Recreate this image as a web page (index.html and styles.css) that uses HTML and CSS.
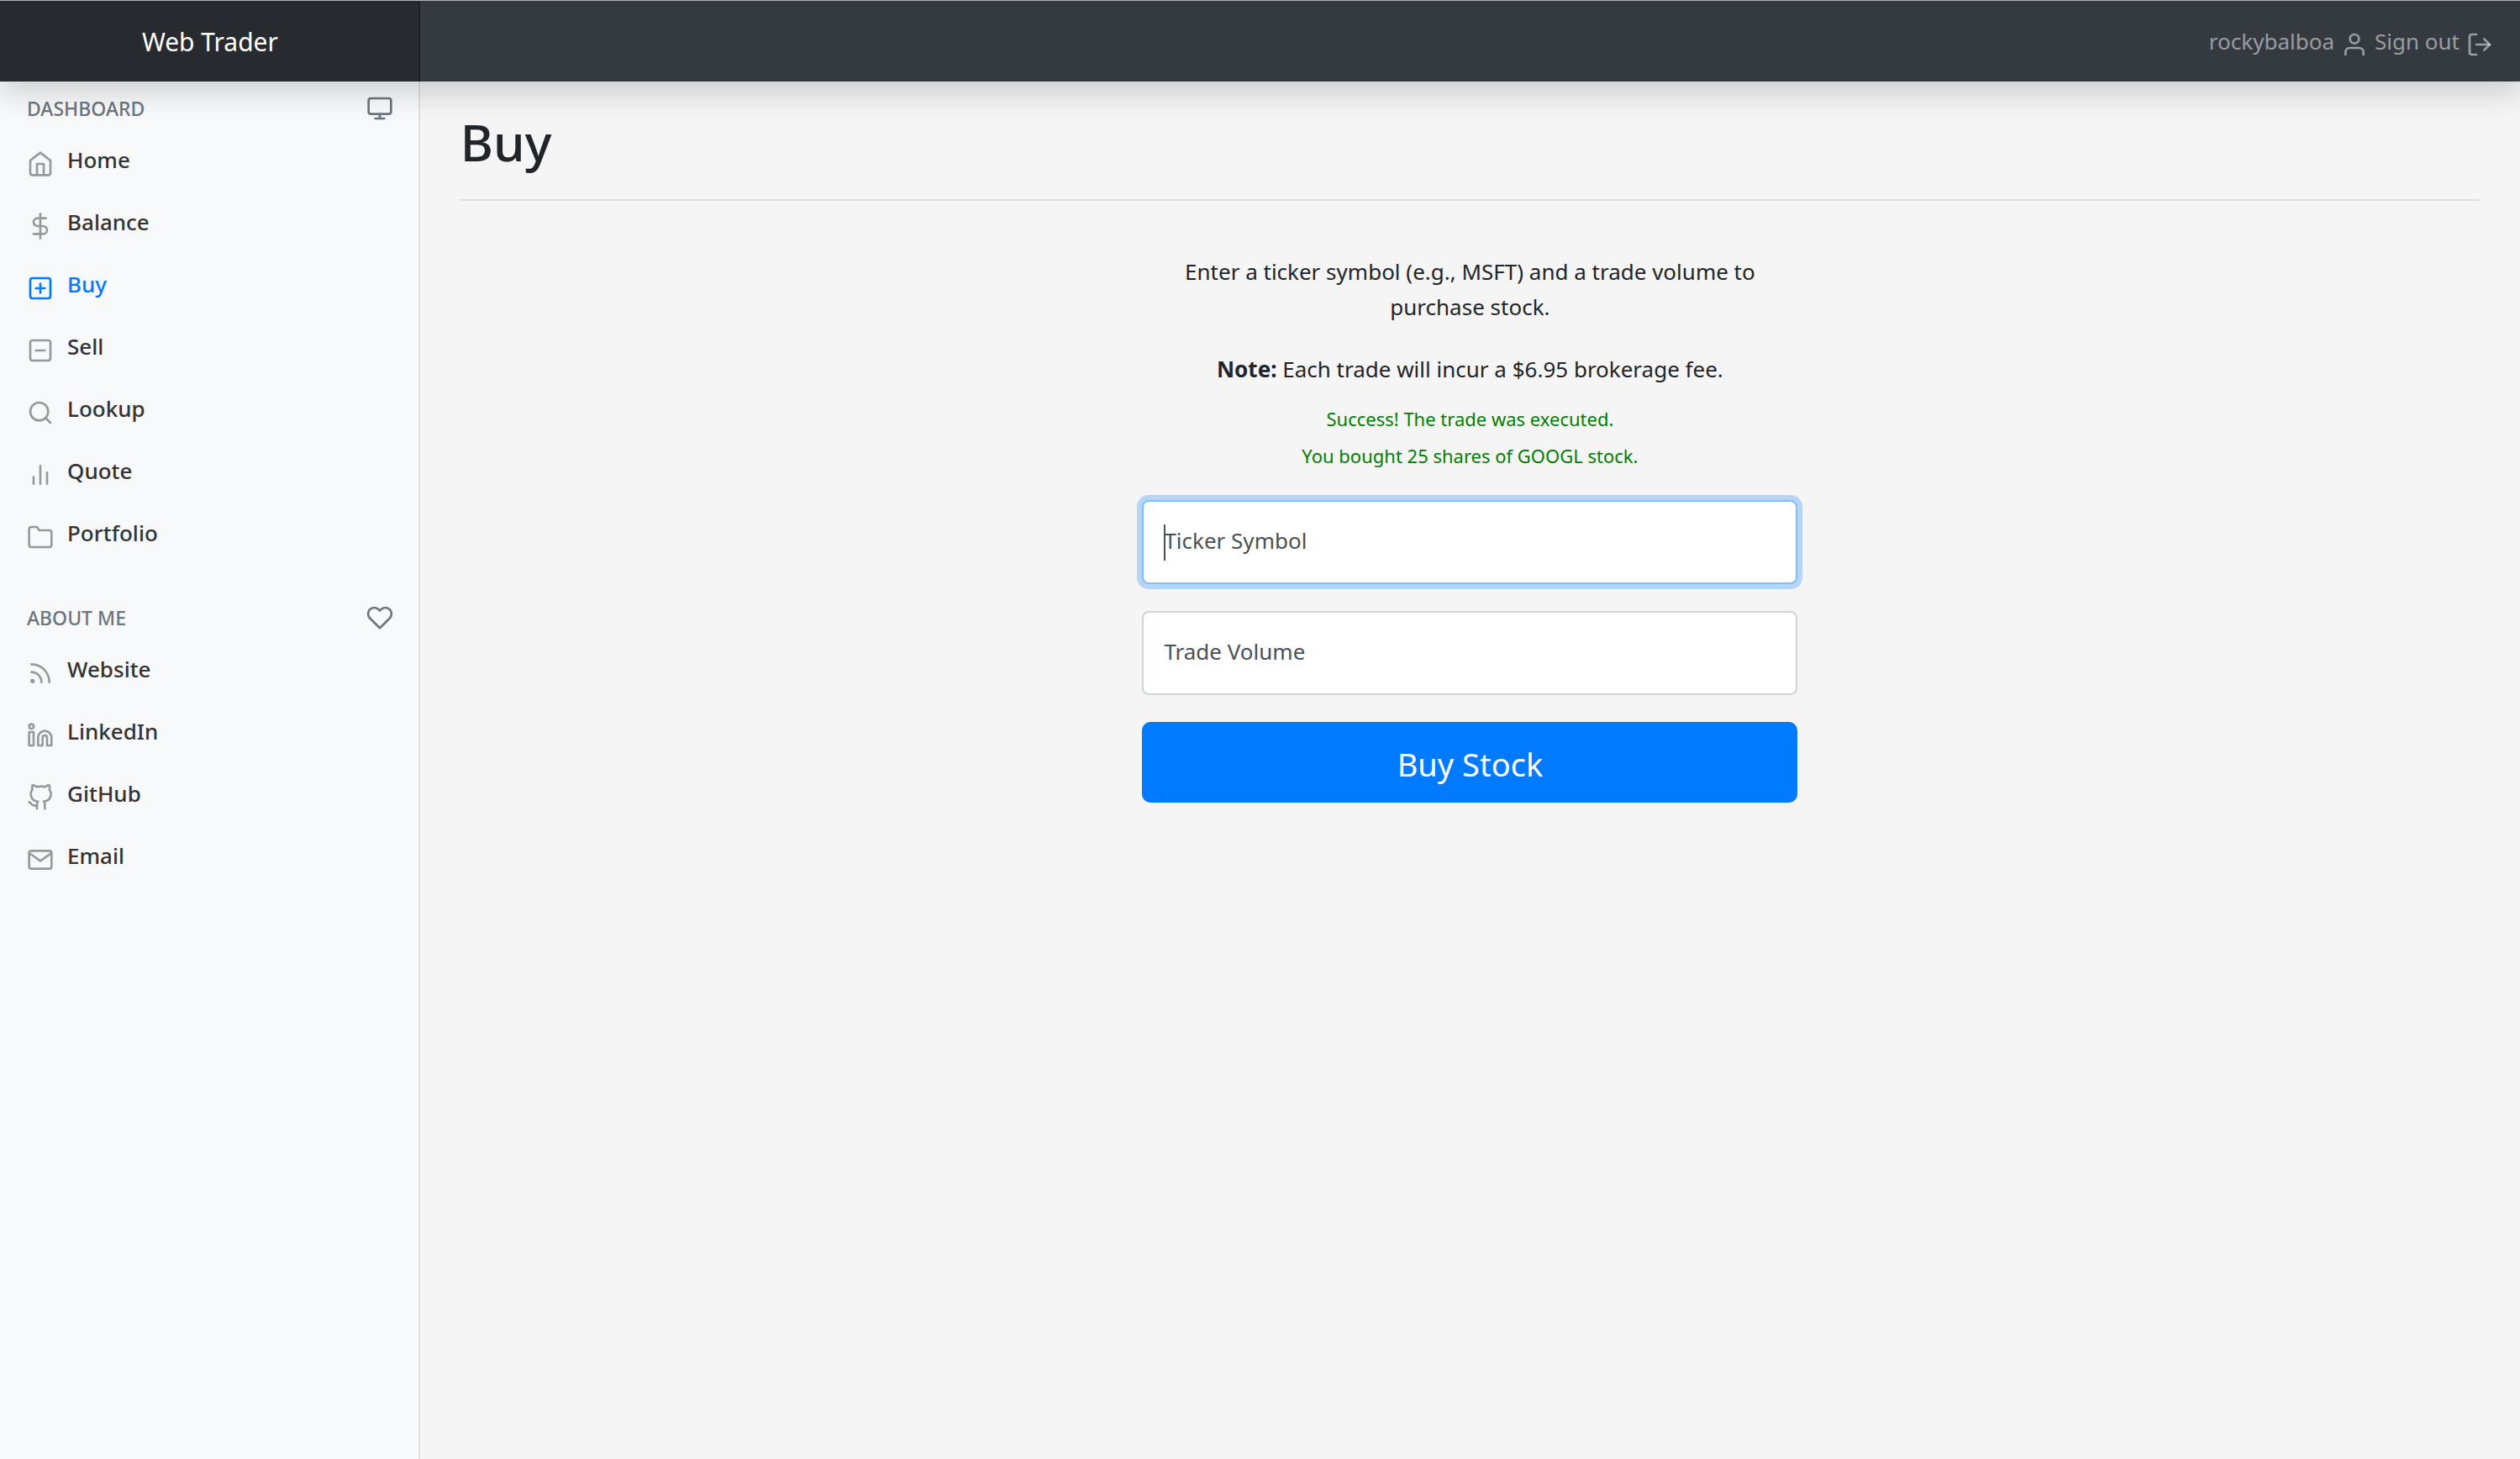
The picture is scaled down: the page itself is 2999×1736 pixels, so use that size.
FILE: index.html
```html
<!DOCTYPE html>
<html lang="en">
<head>
  <meta charset="utf-8">
  <meta name="viewport" content="width=device-width, initial-scale=1">
  <title>Web Trader</title>
  <link rel="stylesheet" href="styles.css">
</head>
<body>
  <header class="navbar">
    <a class="brand" href="#">Web Trader</a>
    <nav class="account" aria-label="Account">
      <a href="#">rockybalboa <svg class="icon" viewBox="0 0 24 24"><path d="M20 21v-2a4 4 0 0 0-4-4H8a4 4 0 0 0-4 4v2"/><circle cx="12" cy="7" r="4"/></svg></a>
      <a href="#">Sign out <svg class="icon" viewBox="0 0 24 24"><path d="M9 21H5a2 2 0 0 1-2-2V5a2 2 0 0 1 2-2h4"/><polyline points="16 17 21 12 16 7"/><line x1="21" y1="12" x2="9" y2="12"/></svg></a>
    </nav>
  </header>

  <div class="layout">
    <nav class="sidebar" aria-label="Main">
      <h6 class="sidebar-heading">
        <span>Dashboard</span>
        <svg class="icon" viewBox="0 0 24 24"><rect x="2" y="3" width="20" height="14" rx="2"/><line x1="8" y1="21" x2="16" y2="21"/><line x1="12" y1="17" x2="12" y2="21"/></svg>
      </h6>
      <ul class="menu">
        <li><a href="#"><svg class="icon" viewBox="0 0 24 24"><path d="M3 9l9-7 9 7v11a2 2 0 0 1-2 2H5a2 2 0 0 1-2-2z"/><polyline points="9 22 9 12 15 12 15 22"/></svg>Home</a></li>
        <li><a href="#"><svg class="icon" viewBox="0 0 24 24"><line x1="12" y1="1" x2="12" y2="23"/><path d="M17 5H9.5a3.5 3.5 0 0 0 0 7h5a3.5 3.5 0 0 1 0 7H6"/></svg>Balance</a></li>
        <li><a class="active" href="#" aria-current="page"><svg class="icon" viewBox="0 0 24 24"><rect x="3" y="3" width="18" height="18" rx="2"/><line x1="12" y1="8" x2="12" y2="16"/><line x1="8" y1="12" x2="16" y2="12"/></svg>Buy</a></li>
        <li><a href="#"><svg class="icon" viewBox="0 0 24 24"><rect x="3" y="3" width="18" height="18" rx="2"/><line x1="8" y1="12" x2="16" y2="12"/></svg>Sell</a></li>
        <li><a href="#"><svg class="icon" viewBox="0 0 24 24"><circle cx="11" cy="11" r="8"/><line x1="21" y1="21" x2="16.65" y2="16.65"/></svg>Lookup</a></li>
        <li><a href="#"><svg class="icon" viewBox="0 0 24 24"><line x1="18" y1="20" x2="18" y2="10"/><line x1="12" y1="20" x2="12" y2="4"/><line x1="6" y1="20" x2="6" y2="14"/></svg>Quote</a></li>
        <li><a href="#"><svg class="icon" viewBox="0 0 24 24"><path d="M22 19a2 2 0 0 1-2 2H4a2 2 0 0 1-2-2V5a2 2 0 0 1 2-2h5l2 3h9a2 2 0 0 1 2 2z"/></svg>Portfolio</a></li>
      </ul>
      <h6 class="sidebar-heading">
        <span>About me</span>
        <svg class="icon" viewBox="0 0 24 24"><path d="M20.84 4.61a5.5 5.5 0 0 0-7.78 0L12 5.67l-1.06-1.06a5.5 5.5 0 0 0-7.78 7.78l1.06 1.06L12 21.23l7.78-7.78 1.06-1.06a5.5 5.5 0 0 0 0-7.78z"/></svg>
      </h6>
      <ul class="menu">
        <li><a href="#"><svg class="icon" viewBox="0 0 24 24"><path d="M4 11a9 9 0 0 1 9 9"/><path d="M4 4a16 16 0 0 1 16 16"/><circle cx="5" cy="19" r="1"/></svg>Website</a></li>
        <li><a href="#"><svg class="icon" viewBox="0 0 24 24"><path d="M16 8a6 6 0 0 1 6 6v7h-4v-7a2 2 0 0 0-4 0v7h-4v-7a6 6 0 0 1 6-6z"/><rect x="2" y="9" width="4" height="12"/><circle cx="4" cy="4" r="2"/></svg>LinkedIn</a></li>
        <li><a href="#"><svg class="icon" viewBox="0 0 24 24"><path d="M9 19c-5 1.5-5-2.5-7-3m14 6v-3.87a3.37 3.37 0 0 0-.94-2.61c3.14-.35 6.44-1.54 6.44-7A5.44 5.44 0 0 0 20 4.77 5.07 5.07 0 0 0 19.91 1S18.73.65 16 2.48a13.38 13.38 0 0 0-7 0C6.27.65 5.09 1 5.09 1A5.07 5.07 0 0 0 5 4.77a5.44 5.44 0 0 0-1.5 3.78c0 5.42 3.3 6.61 6.44 7A3.37 3.37 0 0 0 9 18.13V22"/></svg>GitHub</a></li>
        <li><a href="#"><svg class="icon" viewBox="0 0 24 24"><path d="M4 4h16c1.1 0 2 .9 2 2v12c0 1.1-.9 2-2 2H4c-1.1 0-2-.9-2-2V6c0-1.1.9-2 2-2z"/><polyline points="22 6 12 13 2 6"/></svg>Email</a></li>
      </ul>
    </nav>

    <main class="content">
      <h1 class="title">Buy</h1>
      <form class="trade-form">
        <p>Enter a ticker symbol (e.g., MSFT) and a trade volume to purchase stock.</p>
        <p class="note"><strong>Note:</strong> Each trade will incur a $6.95 brokerage fee.</p>
        <div class="status" role="status">
          <div>Success! The trade was executed.</div>
          <div>You bought 25 shares of GOOGL stock.</div>
        </div>
        <div class="field field-focused">
          <input id="symbol" type="text" placeholder="Ticker Symbol" aria-label="Ticker Symbol">
        </div>
        <div class="field">
          <input id="volume" type="text" placeholder="Trade Volume" aria-label="Trade Volume">
        </div>
        <button class="submit" type="button">Buy Stock</button>
      </form>
    </main>
  </div>
</body>
</html>
```
FILE: styles.css
```css
* {
  box-sizing: border-box;
}

body {
  margin: 0;
  min-height: 100vh;
  display: flex;
  flex-direction: column;
  background: #f5f5f5;
  color: #212529;
  font: 400 26px/42px "Noto Sans", "Open Sans", sans-serif;
}

a {
  color: inherit;
  text-decoration: none;
}

.icon {
  flex: none;
  width: 32px;
  height: 32px;
  fill: none;
  stroke: currentColor;
  stroke-width: 2;
  stroke-linecap: round;
  stroke-linejoin: round;
}

/* Top bar */
.navbar {
  position: relative;
  z-index: 1;
  display: flex;
  align-items: stretch;
  border-top: 1px solid #b2b2b2;
  background: #343a40;
  box-shadow: 0 16px 32px rgba(0, 0, 0, .15);
}

.brand {
  width: 16.6667%;
  padding: 28px 32px 26px;
  background: rgba(0, 0, 0, .25);
  box-shadow: inset -2px 0 0 rgba(0, 0, 0, .25);
  color: #fff;
  font-size: 30px;
  text-align: center;
}

.account {
  display: flex;
  align-items: center;
  gap: 8px;
  margin-left: auto;
  padding-right: 32px;
  color: rgba(255, 255, 255, .5);
  line-height: 40px;
}

.account a {
  display: flex;
  align-items: flex-end;
  gap: 8px;
}

/* Page columns */
.layout {
  flex: 1;
  display: flex;
}

.sidebar {
  width: 16.6667%;
  padding-top: 16px;
  background: #f8f9fa;
  box-shadow: inset -2px 0 0 rgba(0, 0, 0, .1);
}

.sidebar-heading {
  display: flex;
  justify-content: space-between;
  align-items: center;
  margin: 0 0 8px;
  padding: 0 32px;
  color: #6c757d;
  font-size: 23px;
  font-weight: 500;
  line-height: 32px;
  text-transform: uppercase;
}

.menu + .sidebar-heading {
  margin-top: 48px;
}

.menu {
  margin: 0;
  padding: 0;
  list-style: none;
}

.menu a {
  display: flex;
  align-items: flex-end;
  gap: 16px;
  padding: 16px 32px;
  color: #333;
  font-weight: 500;
}

.menu .icon {
  color: #999;
}

.menu .active,
.menu .active .icon {
  color: #007bff;
}

/* Main area */
.content {
  flex: 1;
  padding: 32px 48px;
}

.title {
  margin: 0 0 63px;
  padding-bottom: 28px;
  border-bottom: 2px solid #dee2e6;
  font-size: 60px;
  font-weight: 500;
  line-height: 80px;
}

.trade-form {
  max-width: 780px;
  margin: 0 auto;
  text-align: center;
}

.trade-form p {
  margin: 0 0 32px;
  padding: 0 30px;
}

.trade-form .note {
  margin-bottom: 16px;
}

.status {
  margin-bottom: 31px;
  color: #008000;
  font-size: 22px;
  line-height: 44px;
}

.field {
  position: relative;
  margin-bottom: 32px;
}

.field input {
  display: block;
  width: 100%;
  height: 100px;
  padding: 0 24px 4px;
  border: 2px solid #ced4da;
  border-radius: 8px;
  background: #fff;
  color: #495057;
  font: inherit;
}

.field input::placeholder {
  color: #495057;
  opacity: 1;
}

.field-focused input {
  border-color: #80bdff;
  box-shadow: 0 0 0 6px rgba(0, 123, 255, .25);
}

/* Text cursor of the focused field */
.field-focused::after {
  content: "";
  position: absolute;
  top: 29px;
  left: 26px;
  width: 2px;
  height: 43px;
  background: #495057;
}

.submit {
  display: block;
  width: 100%;
  height: 96px;
  padding: 4px 0 0;
  border: 0;
  border-radius: 10px;
  background: #007bff;
  color: #fff;
  font: inherit;
  font-size: 38px;
}
```
